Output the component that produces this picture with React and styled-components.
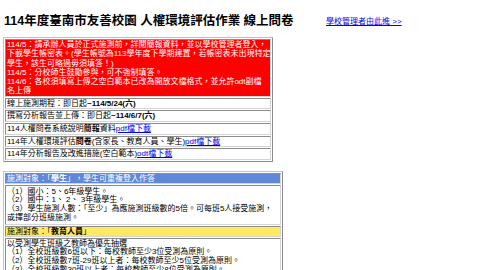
import React from 'react';
import styled, { createGlobalStyle } from 'styled-components';

const Global = createGlobalStyle`
  html, body { margin: 0; padding: 0; background: #fff; }
  body {
    font-family: "Liberation Sans", "Noto Sans CJK TC", sans-serif;
    color: #000;
  }
`;

const Page = styled.div`
  padding: 14px 0 0 3px;
`;

const Header = styled.div`
  display: flex;
  align-items: center;
  height: 15px;
  padding-left: 1px;
`;

const Title = styled.h1`
  margin: 0;
  width: 322px;
  font-size: 12.5px;
  font-weight: bold;
  line-height: 15px;
  white-space: nowrap;
`;

const TopLink = styled.a`
  margin-top: 1px;
  font-size: 8px;
  line-height: 10px;
  color: #0000ee;
  text-decoration: underline;
  white-space: nowrap;
`;

const Board = styled.div`
  box-sizing: border-box;
  width: ${p => p.$w}px;
  margin-top: ${p => p.$mt}px;
  padding: 1px;
  display: flex;
  flex-direction: column;
  gap: 1px;
  border: 1px solid;
  border-color: #c4c4c4 #8c8c8c #8c8c8c #c4c4c4;
`;

const Cell = styled.div`
  border: 1px solid;
  border-color: #8c8c8c #d4d4d4 #d4d4d4 #8c8c8c;
  background: ${p => p.$bg || '#fff'};
  color: ${p => p.$fg || '#000'};
  font-size: 8px;
  line-height: ${p => p.$lh}px;
  padding: ${p => p.$pad || '0 1px'};
  white-space: nowrap;
  overflow: hidden;
`;

const B = styled.b`
  font-weight: bold;
`;

const FileLink = styled.a`
  color: #0000ee;
  text-decoration: underline;
`;

export default function App() {
  return (
    <>
      <Global />
      <Page>
        <Header>
          <Title>114年度臺南市友善校園 人權環境評估作業 線上問卷</Title>
          <TopLink href="#">學校管理者由此進 &gt;&gt;</TopLink>
        </Header>

        <Board $w={270} $mt={8}>
          <Cell $bg="#ff0000" $fg="#fff" $lh={9.3}>
            114/5：請承辦人員於正式施測前，詳閱簡報資料，並以學校管理者登入，<br />
            下載學生帳密表。(學生帳號為113學年度下學期建置，若帳密表未出現特定<br />
            學生，該生可略過毋須填答！)<br />
            114/5：分校師生鼓勵參與，可不強制填答。<br />
            114/6：各校須填寫上傳之空白範本已改為開放文檔格式，並允許odt副檔<br />
            名上傳
          </Cell>
          <Cell $lh={9.6}>線上施測期程：即日起<B>~114/5/24(六)</B></Cell>
          <Cell $lh={9.6}>撰寫分析報告並上傳：即日起<B>~114/6/7(六)</B></Cell>
          <Cell $lh={9.6}>114人權問卷系統說明<B>簡報</B>資料<FileLink href="#">pdf檔下載</FileLink></Cell>
          <Cell $lh={9.6}>114年人權環境評估<B>問卷</B>(含家長、教育人員、學生)<FileLink href="#">pdf檔下載</FileLink></Cell>
          <Cell $lh={9.6}>114年分析報告及改進措施(空白範本)<FileLink href="#">odt檔下載</FileLink></Cell>
        </Board>

        <Board $w={280} $mt={9}>
          <Cell $bg="#6088d8" $fg="#fff" $lh={9}>施測對象：「<B>學生</B>」，學生可重複登入作答</Cell>
          <Cell $lh={8.6} $pad="2px 1px 1.5px">
            （1）國小：5、6年級學生。<br />
            （2）國中：1、 2、 3年級學生。<br />
            （3）學生施測人數：「至少」為應施測班級數的5倍。可每班5人接受施測，<br />
            或擇部分班級施測。
          </Cell>
          <Cell $bg="#ffe960" $lh={9.5}>施測對象：「<B>教育人員</B>」</Cell>
          <Cell $lh={8.8} $pad="0.5px 1px">
            以受測學生班級之教師為優先抽選<br />
            （1）全校班級數6班以下：每校教師至少3位受測為原則。<br />
            （2）全校班級數7班-29班以上者：每校教師至少5位受測為原則。<br />
            （3）全校班級數30班以上者：每校教師至少8位受測為原則。
          </Cell>
        </Board>
      </Page>
    </>
  );
}
